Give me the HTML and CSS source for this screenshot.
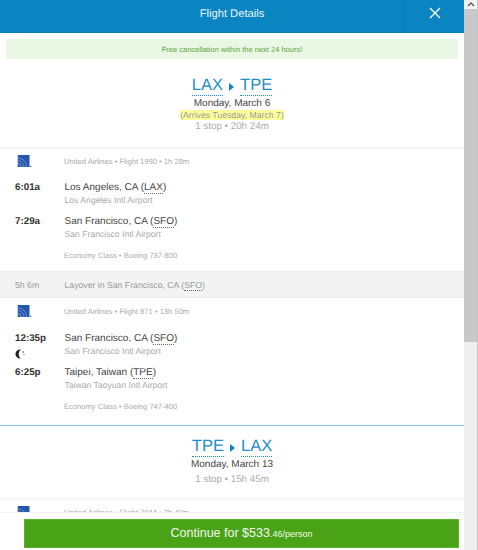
FILE: index.html
```html
<!DOCTYPE html>
<html lang="en">
<head>
<meta charset="utf-8">
<title>Flight Details</title>
<link rel="stylesheet" href="styles.css">
</head>
<body>
<div class="window">
  <main class="panel">
    <header class="topbar">
      <h1 class="topbar-title">Flight Details</h1>
      <button class="close" aria-label="Close">
        <svg viewBox="0 0 12 12" width="12" height="12"><path d="M1 1l10 10M11 1L1 11" stroke="#fff" stroke-width="1.4" fill="none"/></svg>
      </button>
    </header>
    <div class="content">
      <p class="notice">Free cancellation within the next 24 hours!</p>

      <section class="summary summary-first">
        <h2 class="route"><span class="code">LAX</span><svg class="route-arrow" viewBox="0 0 5 8" width="5" height="8"><path d="M0 0l5 4-5 4z" fill="#0b85c2"/></svg><span class="code">TPE</span></h2>
        <div class="date">Monday, March 6</div>
        <div class="arrives"><mark>(Arrives Tuesday, March 7)</mark></div>
        <div class="stops">1 stop • 20h 24m</div>
      </section>

      <section class="leg">
        <div class="leg-head">
          <svg class="logo" viewBox="0 0 14 12" width="14" height="12"><use href="#globe"/></svg>
          <span class="meta">United Airlines • Flight 1990 • 1h 28m</span>
        </div>
        <div class="stop-row">
          <div class="time">6:01a</div>
          <div><div class="city">Los Angeles, CA (<abbr>LAX</abbr>)</div><div class="airport">Los Angeles Intl Airport</div></div>
        </div>
        <div class="stop-row">
          <div class="time">7:29a</div>
          <div><div class="city">San Francisco, CA (<abbr>SFO</abbr>)</div><div class="airport">San Francisco Intl Airport</div></div>
        </div>
        <div class="meta leg-foot">Economy Class • Boeing 737-800</div>
      </section>

      <div class="layover"><span class="layover-time">5h 6m</span><span>Layover in San Francisco, CA (<abbr>SFO</abbr>)</span></div>

      <section class="leg leg-after">
        <div class="leg-head">
          <svg class="logo" viewBox="0 0 14 12" width="14" height="12"><use href="#globe"/></svg>
          <span class="meta">United Airlines • Flight 871 • 13h 50m</span>
        </div>
        <div class="stop-row">
          <div class="time">12:35p
            <svg class="moon" viewBox="0 0 10 10" width="10" height="10"><path d="M6 .5A4.6 4.6 0 1 0 6 9.5 5.4 5.4 0 0 1 6 .5z" fill="#222"/><circle cx="8.2" cy="3" r=".8" fill="#555"/><circle cx="9" cy="5.6" r=".6" fill="#777"/></svg>
          </div>
          <div><div class="city">San Francisco, CA (<abbr>SFO</abbr>)</div><div class="airport">San Francisco Intl Airport</div></div>
        </div>
        <div class="stop-row">
          <div class="time">6:25p</div>
          <div><div class="city">Taipei, Taiwan (<abbr>TPE</abbr>)</div><div class="airport">Taiwan Taoyuan Intl Airport</div></div>
        </div>
        <div class="meta leg-foot">Economy Class • Boeing 747-400</div>
      </section>

      <section class="summary summary-return">
        <h2 class="route"><span class="code">TPE</span><svg class="route-arrow" viewBox="0 0 5 8" width="5" height="8"><path d="M0 0l5 4-5 4z" fill="#0b85c2"/></svg><span class="code">LAX</span></h2>
        <div class="date">Monday, March 13</div>
        <div class="stops stops-return">1 stop • 15h 45m</div>
      </section>

      <section class="leg">
        <div class="leg-head">
          <svg class="logo" viewBox="0 0 14 12" width="14" height="12"><use href="#globe"/></svg>
          <span class="meta">United Airlines • Flight 7944 • 2h 40m</span>
        </div>
      </section>
    </div>
    <footer class="cta-bar">
      <button class="cta">Continue for $533<small>.46/person</small></button>
    </footer>
  </main>
  <div class="scrollbar" aria-hidden="true">
    <div class="scroll-up"><svg viewBox="0 0 8 5" width="8" height="5"><path d="M1 4l3-3 3 3" stroke="#555" stroke-width="1.3" fill="none"/></svg></div>
    <div class="scroll-thumb"></div>
  </div>
</div>
<svg class="defs" width="0" height="0" aria-hidden="true">
  <symbol id="globe" viewBox="0 0 14 12">
    <rect x="0" y="0" width="12" height="12" fill="#2456ad"/>
    <path d="M0 5.5A6.5 6.5 0 0 1 6.5 12M0 2.8A9.2 9.2 0 0 1 9.2 12" stroke="#6f92d0" stroke-width=".9" fill="none"/>
    <path d="M0 8.3A3.7 3.7 0 0 1 3.7 12" stroke="#8aa8dc" stroke-width=".9" fill="none"/>
    <rect x="12.6" y="10.8" width="1.2" height="1.2" fill="#1c4fa8"/>
  </symbol>
</svg>
</body>
</html>
```
FILE: styles.css
```css
* { box-sizing: border-box; }
html, body { margin: 0; height: 100%; overflow: hidden; }
body { font-family: "Liberation Sans", Arial, sans-serif; background: #fff; color: #333; text-rendering: geometricPrecision; }
.defs { position: absolute; }
.window { display: flex; width: 478px; height: 550px; }
.panel { position: relative; width: 464px; height: 550px; overflow: hidden; background: #fff; }
.scrollbar { width: 14px; background: #efefef; display: flex; flex-direction: column; border-right: 1px solid #c4c4c4; }
.scroll-up { height: 9px; display: flex; align-items: center; justify-content: center; background: #f5f5f5; }
.scroll-thumb { height: 333px; background: #c8c8c8; }

.topbar { height: 33px; background: #0b85c2; display: flex; align-items: stretch; border-bottom: 1px solid #0a7ab2; }
.topbar-title { flex: 1; margin: 0; padding-left: 60px; color: #e8f4fb; font-size: 11.2px; font-weight: 400; line-height: 29px; text-align: center; }
.close { width: 60px; background: transparent; border: 0; border-left: 1px solid #0a77ae; padding: 0 0 6px; display: flex; align-items: center; justify-content: center; }

.notice { margin: 6px 6px 0; height: 20px; line-height: 21px; background: #e9f7e4; color: #5aa63a; font-size: 7.5px; text-align: center; }

.summary { text-align: center; }
.summary-first { padding-top: 19px; height: 88px; }
.route { margin: 0; font-size: 16.5px; font-weight: 400; line-height: 20px; color: #1f8ccb; display: flex; justify-content: center; align-items: center; gap: 6px; }
.code { border-bottom: 1px dotted #1f8ccb; line-height: 15px; padding-bottom: 2px; }
.route-arrow { display: block; }
.date { font-size: 10px; line-height: 13px; margin-top: 1px; color: #444; }
.arrives { font-size: 8.7px; line-height: 12px; margin-top: -1px; color: #999; }
.arrives mark { background: #ffff99; color: #999; }
.stops { font-size: 9.8px; line-height: 12px; color: #aaa; }

.leg { border-top: 2px solid #f5f5f5; padding: 5px 0 0 17px; height: 124px; }
.leg-after { border-top: 0; height: 127px; padding-top: 6px; }
.leg-head { display: flex; align-items: center; height: 14px; }
.logo { width: 15px; height: 12px; margin-right: 32px; flex: none; }
.meta { font-size: 7.6px; color: #aaa; }
.stop-row { display: flex; }
.leg-head + .stop-row { margin-top: 13px; }
.leg-after .leg-head + .stop-row { margin-top: 14px; }
.stop-row + .stop-row { margin-top: 9px; }
.time { width: 49.5px; margin-left: -2px; font-size: 9.8px; font-weight: 700; line-height: 13px; color: #333; flex: none; }
.moon { display: block; margin: 4px 0 -2px; }
.city { font-size: 10px; line-height: 13px; color: #444; }
.airport { font-size: 8.65px; line-height: 12px; color: #aaa; }
abbr { border-bottom: 1px dotted #666; text-decoration: none; }
.leg-foot { margin: 11px 0 0 47px; line-height: 10px; }

.layover { height: 27px; background: #f3f3f3; border-top: 1px solid #ededed; border-bottom: 1px solid #ededed; display: flex; align-items: center; padding-left: 15px; font-size: 8.7px; color: #999; }
.layover-time { width: 49.5px; }

.summary-return { border-top: 1px solid #8cc6ec; height: 73px; padding-top: 13px; }
.stops-return { margin-top: 3px; }

.cta-bar { position: absolute; left: 0; right: 0; bottom: 0; height: 38px; background: #fff; padding: 6px 5px 3px 24px; border-top: 1px solid #f3f3f3; }
.cta { display: block; width: 435px; height: 29px; background: #4aa316; border: 1px solid #5bb32a; color: #f1f8ec; font-family: inherit; font-size: 12.5px; line-height: 27px; padding: 0; }
.cta small { font-size: 9px; }
```
